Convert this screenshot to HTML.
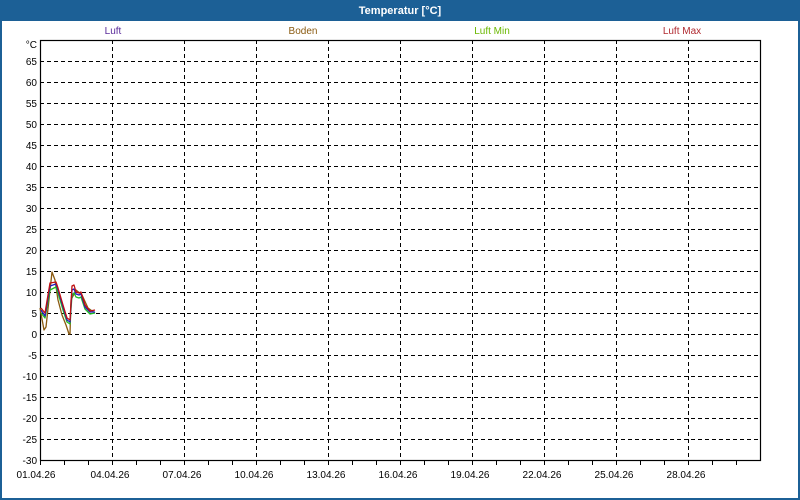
<!DOCTYPE html>
<html><head><meta charset="utf-8"><style>
html,body{margin:0;padding:0;width:800px;height:500px;overflow:hidden;background:#fff}
svg{display:block;font-family:"Liberation Sans","DejaVu Sans",sans-serif}
</style></head><body>
<svg width="800" height="500" viewBox="0 0 800 500" xmlns="http://www.w3.org/2000/svg">
<rect x="0" y="0" width="800" height="500" fill="#1c6096"/>
<rect x="2" y="21" width="796" height="477" fill="#fff"/>
<text x="400" y="14" text-anchor="middle" fill="#fff" font-size="11" font-weight="bold">Temperatur [°C]</text>
<g font-size="10" text-anchor="middle">
<text x="113" y="34" fill="#5a2b9a">Luft</text>
<text x="303" y="34" fill="#8a5a10">Boden</text>
<text x="492" y="34" fill="#6ab800">Luft Min</text>
<text x="682" y="34" fill="#b02a30">Luft Max</text>
</g>
<g stroke="#000" stroke-width="1" stroke-dasharray="4,3" fill="none">
<path d="M40 61.5H760M40 82.5H760M40 103.5H760M40 124.5H760M40 145.5H760M40 166.5H760M40 187.5H760M40 208.5H760M40 229.5H760M40 250.5H760M40 271.5H760M40 292.5H760M40 313.5H760M40 334.5H760M40 355.5H760M40 376.5H760M40 397.5H760M40 418.5H760M40 439.5H760"/>
<path d="M112.5 40V460M184.5 40V460M256.5 40V460M328.5 40V460M400.5 40V460M472.5 40V460M544.5 40V460M616.5 40V460M688.5 40V460"/>
</g>
<rect x="40.5" y="40.5" width="720" height="420" fill="none" stroke="#000" stroke-width="1.2"/>
<g stroke="#000" stroke-width="1">
<path d="M40.5 461v4M64.5 461v4M88.5 461v4M112.5 461v4M136.5 461v4M160.5 461v4M184.5 461v4M208.5 461v4M232.5 461v4M256.5 461v4M280.5 461v4M304.5 461v4M328.5 461v4M352.5 461v4M376.5 461v4M400.5 461v4M424.5 461v4M448.5 461v4M472.5 461v4M496.5 461v4M520.5 461v4M544.5 461v4M568.5 461v4M592.5 461v4M616.5 461v4M640.5 461v4M664.5 461v4M688.5 461v4M712.5 461v4M736.5 461v4"/>
</g>
<g font-size="10" text-anchor="end" fill="#000">
<text x="37" y="48">°C</text>
<text x="37" y="65">65</text><text x="37" y="86">60</text><text x="37" y="107">55</text><text x="37" y="128">50</text><text x="37" y="149">45</text><text x="37" y="170">40</text><text x="37" y="191">35</text><text x="37" y="212">30</text><text x="37" y="233">25</text><text x="37" y="254">20</text><text x="37" y="275">15</text><text x="37" y="296">10</text><text x="37" y="317">5</text><text x="37" y="338">0</text><text x="37" y="359">-5</text><text x="37" y="380">-10</text><text x="37" y="401">-15</text><text x="37" y="422">-20</text><text x="37" y="443">-25</text><text x="37" y="464">-30</text>
</g>
<g font-size="10" text-anchor="middle" fill="#000">
<text x="36" y="478">01.04.26</text><text x="110" y="478">04.04.26</text><text x="182" y="478">07.04.26</text><text x="254" y="478">10.04.26</text><text x="326" y="478">13.04.26</text><text x="398" y="478">16.04.26</text><text x="470" y="478">19.04.26</text><text x="542" y="478">22.04.26</text><text x="614" y="478">25.04.26</text><text x="686" y="478">28.04.26</text>
</g>
<g fill="none" stroke-width="1.3" stroke-linejoin="round">
<polyline stroke="#8a5a10" points="40,308 44,330 46,327 52,272 55,280 58,300 62,315 66,325 69,334 70,334 71,300 76,290 82,295 88,308 95,313"/>
<polyline stroke="#20c020" points="41,313 45,318 50,290 56,287 58,293 63,310 67,322 70,324 72,295 74,293 76,297 79,298 81,297 85,309 90,314 95,313"/>
<polyline stroke="#2020c0" points="41,310 45,316 50,286 56,284 58,290 63,307 67,320 70,322 72,290 74,289 76,294 79,295 81,294 85,307 90,312 95,312"/>
<polyline stroke="#c01010" points="41,308 45,313 50,283 56,282 58,288 63,305 67,318 70,320 72,286 74,285 76,292 79,293 81,292 85,305 90,311 95,310"/>
</g>
</svg>
</body></html>
